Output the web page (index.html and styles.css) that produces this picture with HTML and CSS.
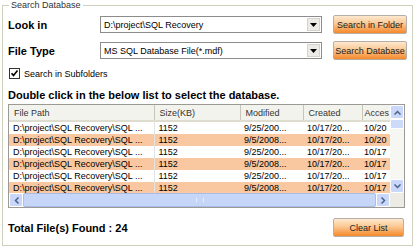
FILE: index.html
```html
<!DOCTYPE html>
<html lang="en">
<head>
    <meta charset="UTF-8">
    <title>Search Database</title>
    <link rel="stylesheet" href="styles.css">
</head>
<body>
    <fieldset class="search-box">
        <legend>Search Database</legend>

        <div class="search-form">
            <label class="field-label">Look in</label>
            <div class="combo">
                <span class="combo-text">D:\project\SQL Recovery</span>
                <span class="combo-arrow"><svg width="7" height="4" viewBox="0 0 7 4"><path d="M0 0h7L3.5 4z" fill="#000"/></svg></span>
            </div>
            <button class="orange-btn">Search in Folder</button>

            <label class="field-label">File Type</label>
            <div class="combo">
                <span class="combo-text">MS SQL Database File(*.mdf)</span>
                <span class="combo-arrow"><svg width="7" height="4" viewBox="0 0 7 4"><path d="M0 0h7L3.5 4z" fill="#000"/></svg></span>
            </div>
            <button class="orange-btn">Search Database</button>
        </div>

        <label class="check-row">
            <span class="check-box"><svg width="9" height="9" viewBox="0 0 9 9"><path d="M1.5 4.2l2 2.2 4-5" fill="none" stroke="#000" stroke-width="1.6"/></svg></span>
            Search in Subfolders
        </label>

        <h2 class="hint">Double click in the below list to select the database.</h2>

        <div class="list-view">
            <div class="list-body">
                <table class="file-table">
                    <colgroup>
                        <col style="width:145px">
                        <col style="width:86px">
                        <col style="width:63px">
                        <col style="width:59px">
                        <col style="width:28px">
                    </colgroup>
                    <thead>
                        <tr>
                            <th>File Path</th>
                            <th>Size(KB)</th>
                            <th>Modified</th>
                            <th>Created</th>
                            <th>Acces</th>
                        </tr>
                    </thead>
                    <tbody id="file-rows"></tbody>
                </table>
            </div>
            <div class="vscroll">
                <span class="scroll-btn"><svg width="7" height="5" viewBox="0 0 7 5"><path d="M0.5 4.5L3.5 1.5 6.5 4.5" fill="none" stroke="#4d6185" stroke-width="1.5"/></svg></span>
                <span class="vthumb"></span>
                <span class="vtrack"></span>
                <span class="scroll-btn"><svg width="7" height="5" viewBox="0 0 7 5"><path d="M0.5 0.5L3.5 3.5 6.5 0.5" fill="none" stroke="#4d6185" stroke-width="1.5"/></svg></span>
            </div>
            <div class="hscroll">
                <span class="scroll-btn"><svg width="5" height="7" viewBox="0 0 5 7"><path d="M4.5 0.5L1.5 3.5 4.5 6.5" fill="none" stroke="#4d6185" stroke-width="1.5"/></svg></span>
                <span class="hthumb"><span class="grip"></span></span>
                <span class="scroll-btn"><svg width="5" height="7" viewBox="0 0 5 7"><path d="M0.5 0.5L3.5 3.5 0.5 6.5" fill="none" stroke="#4d6185" stroke-width="1.5"/></svg></span>
            </div>
            <div class="corner"></div>
        </div>

        <div class="footer">
            <span class="total">Total File(s) Found : 24</span>
            <button class="orange-btn clear-btn">Clear List</button>
        </div>
    </fieldset>

    <script>
        // Zeilen der Dateiliste
        const rows = [
            ['9/25/200...', '10/20'],
            ['9/5/2008...', '10/20'],
            ['9/25/200...', '10/17'],
            ['9/5/2008...', '10/17'],
            ['9/25/200...', '10/17'],
            ['9/5/2008...', '10/17']
        ];
        const tbody = document.getElementById('file-rows');

        rows.forEach(function(r, i) {
            const tr = document.createElement('tr');
            if (i % 2 === 1) {
                tr.classList.add('alt');
            }
            const cells = ['D:\\project\\SQL Recovery\\SQL ...', '1152', r[0], '10/17/20...', r[1]];
            cells.forEach(function(text) {
                const td = document.createElement('td');
                td.textContent = text;
                tr.appendChild(td);
            });
            tbody.appendChild(tr);
        });
    </script>
</body>
</html>
```

FILE: styles.css
```css
body {
    margin: 0;
    background: #fff;
    font-family: "Liberation Sans", Arial, sans-serif;
    font-size: 9px;
    color: #000;
}
.search-box {
    width: 411px;
    height: 246px;
    margin: 0 0 0 2px;
    padding: 0 3px 0 5px;
    border: 1px solid #d0d0bf;
    box-sizing: border-box;
    min-width: 0;
}
.search-box legend {
    padding: 0 2px;
    margin-left: 1px;
    font-size: 9px;
    line-height: 11px;
    color: #333;
}
.search-form {
    display: grid;
    grid-template-columns: 81px 222px 74px;
    grid-template-rows: 19px 19px;
    column-gap: 11px;
    row-gap: 7px;
    align-items: center;
    margin-top: 4px;
}
.field-label {
    font-size: 11px;
    font-weight: bold;
}
.combo {
    display: flex;
    align-items: center;
    height: 17px;
    border: 1px solid #8c8c8c;
    box-sizing: border-box;
    background: #fff;
}
.combo-text {
    flex: 1;
    padding-left: 3px;
}
.combo-arrow {
    display: flex;
    align-items: center;
    justify-content: center;
    width: 13px;
    height: 13px;
    margin-right: 1px;
    background: #ecebe6;
    border: 1px solid #d4d3cc;
    box-sizing: border-box;
}
.orange-btn {
    height: 19px;
    padding: 0;
    border: 1px solid #b4b0a8;
    border-radius: 2px;
    background: linear-gradient(#fde8cf, #fbc892 45%, #f6882a);
    font-family: "Liberation Sans", Arial, sans-serif;
    font-size: 9px;
    color: #222;
    cursor: pointer;
}
.check-row {
    display: flex;
    align-items: center;
    gap: 4px;
    height: 11px;
    margin-top: 8px;
    margin-left: 1px;
}
.check-box {
    display: flex;
    align-items: center;
    justify-content: center;
    width: 9px;
    height: 9px;
    border: 1px solid #333;
    background: #fff;
}
.hint {
    margin: 10px 0 0 0;
    font-size: 11px;
    line-height: 13px;
    font-weight: bold;
}
.list-view {
    display: grid;
    grid-template-columns: 381px 14px;
    grid-template-rows: 88px 14px;
    width: 397px;
    margin-top: 2px;
    border: 1px solid #9c9a94;
    box-sizing: border-box;
}
.list-body {
    overflow: hidden;
    background: #fff;
}
.file-table {
    table-layout: fixed;
    width: 381px;
    border-collapse: collapse;
}
.file-table th {
    height: 16px;
    padding: 0 0 0 5px;
    background: #f3f3ee;
    border-right: 1px solid #c7c5b8;
    border-bottom: 2px solid #dedccf;
    box-sizing: border-box;
    text-align: left;
    font-weight: normal;
    color: #333;
    white-space: nowrap;
    overflow: hidden;
}
.file-table th:last-child {
    padding-left: 2px;
    border-right: none;
}
.file-table td {
    height: 12px;
    padding: 0 0 0 4px;
    line-height: 12px;
    white-space: nowrap;
    overflow: hidden;
}
.file-table td:last-child {
    padding-left: 2px;
}
.file-table td:first-child {
    border-right: 1px solid #e4e4e4;
}
.file-table tr.alt td {
    background: #f9c8a0;
}
.vscroll {
    display: flex;
    flex-direction: column;
    background: #f6f6f2;
}
.scroll-btn {
    display: flex;
    align-items: center;
    justify-content: center;
    width: 14px;
    height: 14px;
    background: #c9d8fa;
    border: 1px solid #fff;
    border-radius: 2px;
    box-sizing: border-box;
}
.vthumb {
    width: 14px;
    height: 10px;
    background: #cddbfb;
    border: 1px solid #fff;
    box-sizing: border-box;
}
.vtrack {
    flex: 1;
}
.hscroll {
    display: flex;
    background: #f6f6f2;
}
.hthumb {
    flex: 1;
    display: flex;
    align-items: center;
    justify-content: center;
    background: #c6d6f8;
    border: 1px solid #a9bde8;
    border-radius: 2px;
    box-sizing: border-box;
}
.grip {
    width: 6px;
    height: 4px;
    border-left: 1px solid #e8eefc;
    border-right: 1px solid #e8eefc;
}
.corner {
    background: #ecebe4;
}
.footer {
    display: flex;
    align-items: center;
    justify-content: space-between;
    height: 19px;
    margin-top: 10px;
    padding-right: 5px;
}
.total {
    font-size: 11px;
    font-weight: bold;
}
.clear-btn {
    width: 71px;
}
```
